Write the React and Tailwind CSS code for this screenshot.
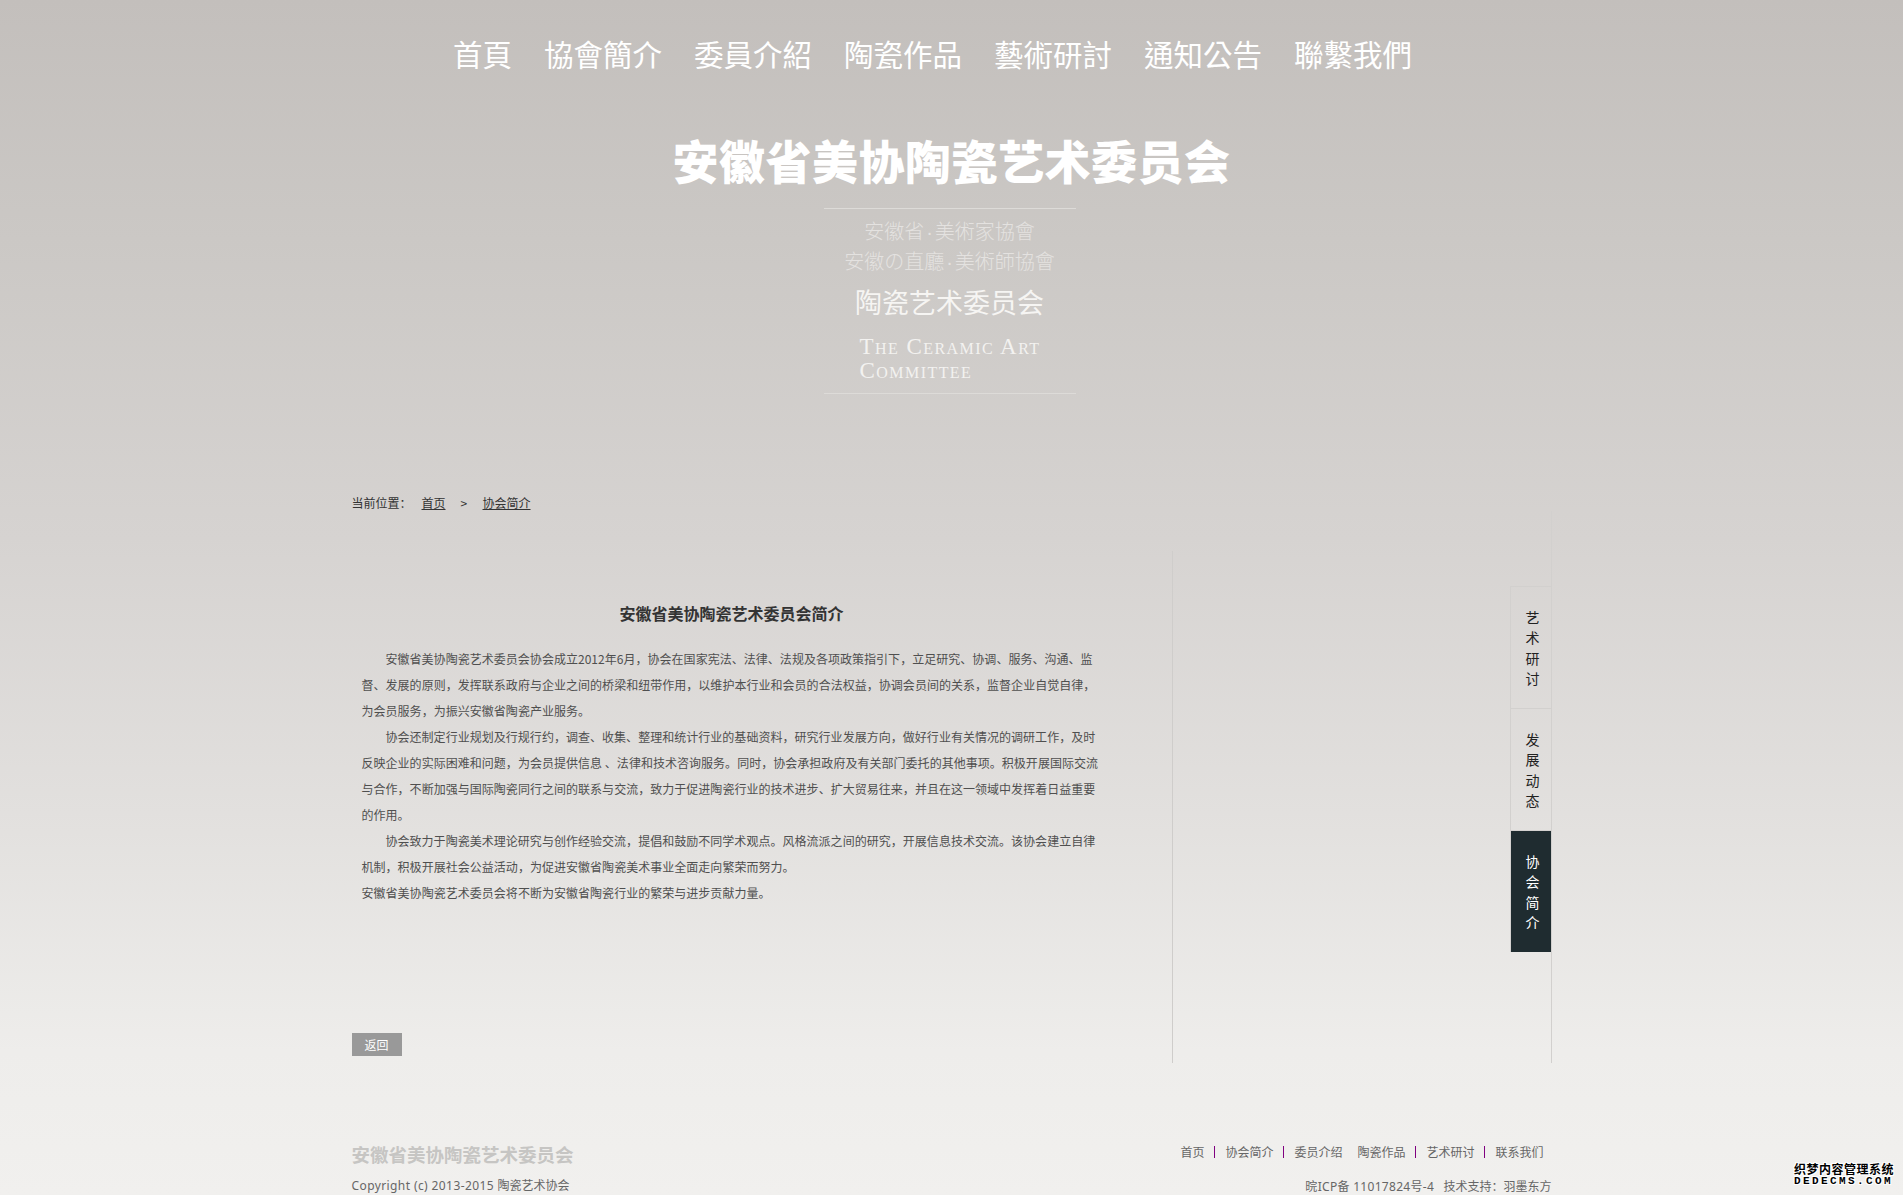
const navItems = ["首頁", "協會簡介", "委員介紹", "陶瓷作品", "藝術研討", "通知公告", "聯繫我們"];

const paragraphs = [
  [
    "安徽省美协陶瓷艺术委员会协会成立2012年6月，协会在国家宪法、法律、法规及各项政策指引下，立足研究、协调、服务、沟通、监",
    "督、发展的原则，发挥联系政府与企业之间的桥梁和纽带作用，以维护本行业和会员的合法权益，协调会员间的关系，监督企业自觉自律，",
    "为会员服务，为振兴安徽省陶瓷产业服务。",
  ],
  [
    "协会还制定行业规划及行规行约，调查、收集、整理和统计行业的基础资料，研究行业发展方向，做好行业有关情况的调研工作，及时",
    "反映企业的实际困难和问题，为会员提供信息 、法律和技术咨询服务。同时，协会承担政府及有关部门委托的其他事项。积极开展国际交流",
    "与合作，不断加强与国际陶瓷同行之间的联系与交流，致力于促进陶瓷行业的技术进步、扩大贸易往来，并且在这一领域中发挥着日益重要",
    "的作用。",
  ],
  [
    "协会致力于陶瓷美术理论研究与创作经验交流，提倡和鼓励不同学术观点。风格流派之间的研究，开展信息技术交流。该协会建立自律",
    "机制，积极开展社会公益活动，为促进安徽省陶瓷美术事业全面走向繁荣而努力。",
  ],
];

const tabs = [
  { label: "艺术研讨", active: false },
  { label: "发展动态", active: false },
  { label: "协会简介", active: true },
];

const footerLinks = [
  ["首页", "line"],
  ["协会简介", "line"],
  ["委员介绍", "gap"],
  ["陶瓷作品", "line"],
  ["艺术研讨", "line"],
  ["联系我们", "none"],
];

function SideTab({ label, active }) {
  return (
    <div
      className={`w-[41px] h-[122px] border-t border-l flex flex-col items-center justify-center pl-[4px] text-[14px] leading-[20.5px] ${
        active
          ? "bg-[#1f2c30] text-white border-[#d4d2d0]"
          : "text-[#222] border-[#d2d0ce]"
      }`}
    >
      {label.split("").map((ch) => (
        <span key={ch}>{ch}</span>
      ))}
    </div>
  );
}

function Dot() {
  return <span className="font-['Liberation_Sans',sans-serif] px-[2px]">·</span>;
}

export default function App() {
  return (
    <div className="relative h-[1195px] overflow-hidden bg-[linear-gradient(180deg,#c3bfbc_0%,#cbc8c5_20%,#d6d3d1_45%,#e2e0de_68%,#eeedeb_88%,#f1f0ee_100%)] font-['Noto_Sans_CJK_SC','Liberation_Sans',sans-serif] text-[12px] text-[#4f4f4f]">
      {/* Top nav */}
      <nav className="flex justify-center gap-[32px] pt-[34px] pr-[38px] h-[133px] font-['Noto_Sans_CJK_TC',serif] text-[29.5px] leading-[38px] text-white">
        {navItems.map((item) => (
          <span key={item}>{item}</span>
        ))}
      </nav>

      {/* Logo + title */}
      <header className="flex flex-col items-center">
        <div className="h-[75px] mt-[-3px] mb-[3px] font-['Noto_Sans_CJK_TC',sans-serif] font-black text-[46px] leading-[58px] text-white tracking-[0.5px] whitespace-nowrap">
          安徽省美协陶瓷艺术委员会
        </div>
        <div className="w-[252px] h-[186px] border-y border-[#dddbd8] flex flex-col items-center ml-[-4px]">
          <p className="mt-[7px] text-[20px] leading-[30px] font-light text-[#e4e2e0] whitespace-nowrap">安徽省<Dot />美術家協會</p>
          <p className="mt-[-1px] text-[20px] leading-[30px] font-light text-[#e4e2e0] whitespace-nowrap">安徽の直廳<Dot />美術師協會</p>
          <p className="mt-[7px] text-[27px] leading-[36px] text-[#f6f5f3] whitespace-nowrap">陶瓷艺术委员会</p>
          <p className="mt-[15px] w-[180px] font-['Liberation_Serif',serif] text-[23px] leading-[24px] [font-variant:small-caps] tracking-[1.45px] text-[#f3f2f0] whitespace-nowrap">
            The Ceramic Art
            <br />
            Committee
          </p>
        </div>
      </header>

      {/* Main */}
      <main className="w-[1200px] mx-auto">
        <div className="pt-[100px] h-[117px] leading-[18px] text-[#333] flex">
          <span className="w-[70px]">当前位置：</span>
          <a className="underline w-[39px]">首页</a>
          <span className="w-[22px]">&gt;</span>
          <a className="underline">协会简介</a>
        </div>

        <div className="flex h-[552px]">
          <div className="w-[821px] h-[512px] mt-[40px] border-r border-[#cfcdcb] flex flex-col">
            <div className="w-[750px] pl-[10px]">
              <h1 className="mt-[50px] text-center text-[16px] font-bold leading-[24px] text-[#333]">安徽省美协陶瓷艺术委员会简介</h1>
              <div className="mt-[21px] leading-[26px] tracking-[0.03px] whitespace-nowrap">
                {paragraphs.map((lines, i) => (
                  <p key={i}>
                    {lines.map((line, j) => (
                      <span key={j} className={j === 0 ? "block pl-[24px]" : "block"}>{line}</span>
                    ))}
                  </p>
                ))}
                <p>安徽省美协陶瓷艺术委员会将不断为安徽省陶瓷行业的繁荣与进步贡献力量。</p>
              </div>
            </div>
            <button className="mt-auto mb-[7px] w-[50px] h-[23px] bg-[#999] text-white text-[12px] leading-[23px]">返回</button>
          </div>

          <div className="flex-1 border-r border-[#d2d0ce] flex flex-col items-end">
            <div className="mt-[75px]">
              {tabs.map((tab) => (
                <SideTab key={tab.label} label={tab.label} active={tab.active} />
              ))}
            </div>
          </div>
        </div>

        {/* Footer */}
        <footer className="flex justify-between pt-[79px]">
          <div>
            <div className="font-['Noto_Sans_CJK_TC',sans-serif] font-bold text-[18.5px] leading-[24px] text-[#c6c5c3] whitespace-nowrap">
              安徽省美协陶瓷艺术委员会
            </div>
            <p className="mt-[11px] leading-[18px] text-[#666] font-['Noto_Sans','Noto_Sans_CJK_SC',sans-serif]">
              <span className="tracking-[0.4px]">Copyright (c) 2013-2015 </span>陶瓷艺术协会
            </p>
          </div>
          <div className="flex flex-col items-end">
            <div className="flex items-center h-[18px] mt-[1px] pr-[8px] text-[#666]">
              {footerLinks.map(([name, sep]) => (
                <span key={name} className="flex items-center">
                  <span>{name}</span>
                  {sep === "line" && <span className="mx-[10px] w-px h-[12px] bg-[#800080]" />}
                  {sep === "gap" && <span className="w-[15px]" />}
                </span>
              ))}
            </div>
            <p className="mt-[17px] leading-[18px] text-[#666] whitespace-nowrap font-['Noto_Sans','Noto_Sans_CJK_SC',sans-serif]">
              <span className="tracking-[0.3px]">晥ICP备 11017824号-4</span>&nbsp;&nbsp;&nbsp;技术支持：羽墨东方
            </p>
          </div>
        </footer>
      </main>

      {/* Watermark */}
      <div className="absolute left-[1794px] top-[1162px] w-[100px] text-black font-bold [text-shadow:-1px_-1px_0_#fff,1px_-1px_0_#fff,-1px_1px_0_#fff,1px_1px_0_#fff]">
        <div className="text-[12px] leading-[13px] tracking-[0.5px] whitespace-nowrap">织梦内容管理系统</div>
        <div className="mt-[1px] font-['Liberation_Mono',monospace] text-[11px] leading-[11px] tracking-[2.4px] whitespace-nowrap">DEDECMS.COM</div>
      </div>
    </div>
  );
}
